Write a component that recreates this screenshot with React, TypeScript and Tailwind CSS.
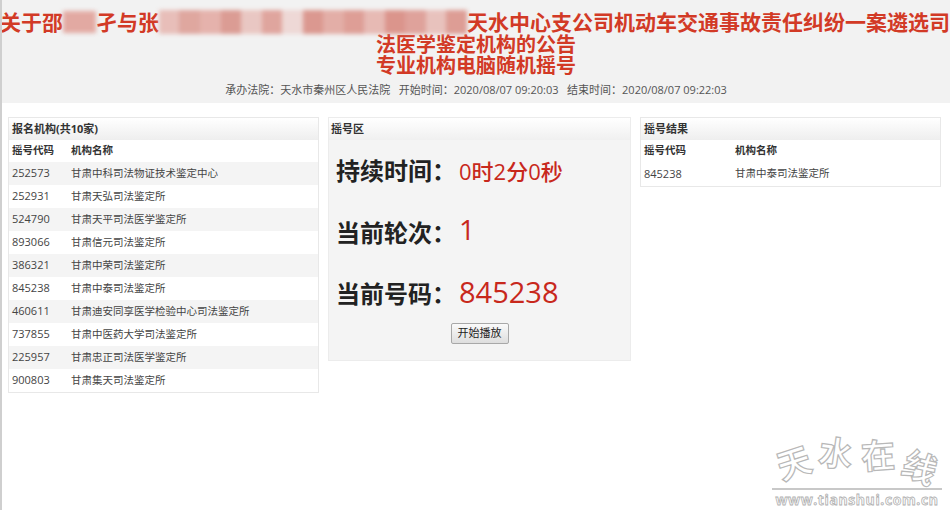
import React from 'react';

// 摇号公告页：头部标题 + 三栏（报名机构 / 摇号区 / 摇号结果）

const FONT = '"Open Sans", "Noto Sans CJK SC", sans-serif';

const jigou: [string, string][] = [
  ['252573', '甘肃中科司法物证技术鉴定中心'],
  ['252931', '甘肃天弘司法鉴定所'],
  ['524790', '甘肃天平司法医学鉴定所'],
  ['893066', '甘肃信元司法鉴定所'],
  ['386321', '甘肃中荣司法鉴定所'],
  ['845238', '甘肃中泰司法鉴定所'],
  ['460611', '甘肃迪安同享医学检验中心司法鉴定所'],
  ['737855', '甘肃中医药大学司法鉴定所'],
  ['225957', '甘肃忠正司法医学鉴定所'],
  ['900803', '甘肃集天司法鉴定所'],
];

// 标题里打码的部分（马赛克色块）
const mosaic = ['#e7b9b3', '#dd9f97', '#e4aca5', '#d9938a', '#e9c3be', '#de9d95', '#eed6d3', '#d98f86', '#e2a79f', '#dc968d', '#e6b4ae', '#d98b82', '#dd9a92', '#e8bdb8', '#db948b'];

function PanelTitle({ children }: { children: React.ReactNode }) {
  return (
    <div className="h-[22px] flex items-center px-[3px] bg-gradient-to-b from-white to-[#eeeeee] font-bold text-[11px] text-[#333]">
      {children}
    </div>
  );
}

function Watermark() {
  const chars = ['天', '水', '在', '线'];
  const rot = ['-rotate-[18deg]', 'rotate-[8deg]', '-rotate-[4deg]', 'rotate-[22deg]'];
  return (
    <div className="absolute right-[8px] bottom-[2px] w-[170px] flex flex-col items-center select-none">
      <div className="flex gap-[8px] h-[46px] items-end">
        {chars.map((c, i) => (
          <span
            key={c}
            className={`text-[34px] leading-none font-bold text-white [-webkit-text-stroke:1.2px_#b8b8b8] ${rot[i]}`}
            style={{ marginBottom: [2, 12, 10, -2][i] }}
          >
            {c}
          </span>
        ))}
      </div>
      <div className="w-full h-[2px] bg-[#c8c8c8] mt-[6px]" />
      <div className="text-[14px] leading-[16px] font-bold tracking-[0.6px] text-white [-webkit-text-stroke:0.8px_#b0b0b0] mt-[2px]">
        www.tianshui.com.cn
      </div>
    </div>
  );
}

export default function App() {
  return (
    <div
      className="relative w-[950px] h-[510px] bg-white overflow-hidden border-l-[2px] border-[#cfcfcf]"
      style={{ fontFamily: FONT }}
    >
      {/* ── 头部 ── */}
      <div className="h-[103px] bg-[#f2f2f2] pt-[10px] text-center">
        <div className="text-[21px] leading-[22px] font-bold text-[#d23a26] whitespace-nowrap -ml-[2px] flex items-center justify-center">
          <span>关于邵</span>
          <span className="inline-block w-[34px] h-[22px] bg-[#e2a9a2] blur-[2px]" />
          <span>孑与张</span>
          <span className="inline-flex h-[24px] w-[318px] blur-[2px] opacity-90">
            {mosaic.map((c, i) => (
              <span key={i} className="flex-1" style={{ background: c }} />
            ))}
          </span>
          <span>天水中心支公司机动车交通事故责任纠纷一案遴选司</span>
        </div>
        <div className="text-[20px] leading-[21px] font-bold text-[#d23a26]">法医学鉴定机构的公告</div>
        <div className="text-[20px] leading-[21px] font-bold text-[#d23a26]">专业机构电脑随机摇号</div>
        <div className="mt-[6px] text-[11px] leading-[16px] text-[#555]">
          承办法院：天水市秦州区人民法院&nbsp;&nbsp;&nbsp;开始时间：2020/08/07 09:20:03&nbsp;&nbsp;&nbsp;结束时间：2020/08/07 09:22:03
        </div>
      </div>

      {/* ── 三栏 ── */}
      <div className="flex items-start gap-[9px] pl-[6px] pt-[14px] text-[10.5px] text-[#444]">
        {/* 报名机构 */}
        <div className="w-[311px] border border-[#e8e8e8]">
          <PanelTitle>报名机构(共10家)</PanelTitle>
          <div className="flex h-[22px] items-center font-bold text-[#333]">
            <span className="w-[62px] pl-[3px]">摇号代码</span>
            <span>机构名称</span>
          </div>
          {jigou.map(([code, name], i) => (
            <div
              key={code}
              className={`flex h-[23px] items-center ${i % 2 === 0 ? 'bg-[#f4f4f4]' : 'bg-white'}`}
            >
              <span className="w-[62px] pl-[3px] text-[11px]">{code}</span>
              <span>{name}</span>
            </div>
          ))}
        </div>

        {/* 摇号区 */}
        <div className="w-[303px] h-[244px] bg-[#f4f4f4] border border-[#ececec]">
          <div className="h-[22px] flex items-center px-[2px] bg-gradient-to-b from-white to-[#f0f0f0] text-[11px] text-[#333] font-semibold">
            摇号区
          </div>
          <div className="pl-[7px]">
            <div className="h-[62px] flex items-center">
              <span className="text-[24px] font-bold text-[#222]">持续时间：</span>
              <span className="ml-[3px] text-[22px] text-[#c8281c] font-medium">0时2分0秒</span>
            </div>
            <div className="h-[61px] flex items-center">
              <span className="text-[24px] font-bold text-[#222]">当前轮次：</span>
              <span className="ml-[3px] text-[28px] text-[#c8281c] -mt-[8px]">1</span>
            </div>
            <div className="h-[61px] flex items-center">
              <span className="text-[24px] font-bold text-[#222]">当前号码：</span>
              <span className="ml-[3px] text-[29px] text-[#c8281c] -mt-[4px]">845238</span>
            </div>
          </div>
          <div className="flex justify-center -mt-[1px]">
            <button className="h-[21px] px-[6px] text-[11px] text-[#222] border border-[#a8a8a8] rounded-[2px] bg-gradient-to-b from-[#fafafa] to-[#dedede]">
              开始播放
            </button>
          </div>
        </div>

        {/* 摇号结果 */}
        <div className="w-[301px] border border-[#e8e8e8]">
          <PanelTitle>摇号结果</PanelTitle>
          <div className="flex h-[22px] items-center font-bold text-[#333]">
            <span className="w-[94px] pl-[3px]">摇号代码</span>
            <span>机构名称</span>
          </div>
          <div className="flex h-[24px] items-center">
            <span className="w-[94px] pl-[3px] text-[11px]">845238</span>
            <span>甘肃中泰司法鉴定所</span>
          </div>
        </div>
      </div>

      <Watermark />
    </div>
  );
}
